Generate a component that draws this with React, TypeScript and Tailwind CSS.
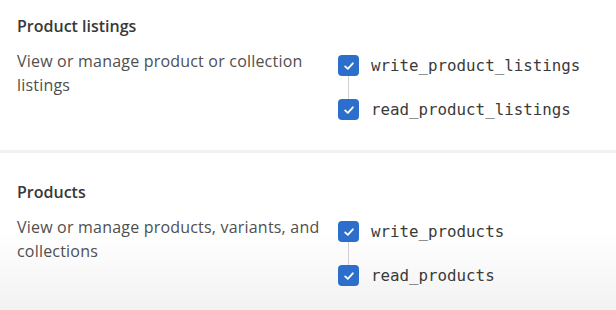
import React from 'react'

type Scope = { title: string; description: string; scopes: string[] }

const sections: Scope[] = [
  {
    title: 'Product listings',
    description: 'View or manage product or collection listings',
    scopes: ['write_product_listings', 'read_product_listings'],
  },
  {
    title: 'Products',
    description: 'View or manage products, variants, and collections',
    scopes: ['write_products', 'read_products'],
  },
]

function Check() {
  return (
    <span className="flex h-[21px] w-[21px] shrink-0 items-center justify-center rounded-[4px] bg-[#2c6ecb]">
      <svg width="14" height="14" viewBox="0 0 20 20" fill="none">
        <path d="M4.5 10.5l3.8 3.6 7.2-8" stroke="white" strokeWidth="2.6" strokeLinecap="round" strokeLinejoin="round" />
      </svg>
    </span>
  )
}

function ScopeList({ scopes }: { scopes: string[] }) {
  return (
    <div className="mt-[6px] flex flex-col">
      {scopes.map((s, i) => (
        <React.Fragment key={s}>
          {i > 0 && <div className="ml-[10px] h-[23px] w-px bg-[#d0d0d0]" />}
          <div className="flex items-center gap-[12px]">
            <Check />
            <span className="font-['DejaVu_Sans_Mono',monospace] text-[15.8px] leading-[21px] text-[#3a3a3a]">{s}</span>
          </div>
        </React.Fragment>
      ))}
    </div>
  )
}

export default function App() {
  return (
    <div className="h-[310px] w-[616px] overflow-hidden bg-white font-['Open_Sans',sans-serif] text-[#333]">
      {sections.map((sec, i) => (
        <section
          key={sec.title}
          className={
            i === 0
              ? 'h-[153px] border-b-[3px] border-[#f1f1f4] pl-[17px] pt-[14px]'
              : 'h-[157px] bg-gradient-to-b from-white from-50% to-[#f2f2f2] pl-[17px] pt-[27px]'
          }
        >
          <h2 className="text-[16px] font-semibold leading-[24px] text-[#383838]">{sec.title}</h2>
          <div className="mt-[11px] flex">
            <p className="w-[316px] shrink-0 text-[16px] tracking-[0.2px] leading-[24px] text-[#4f4f4f]">{sec.description}</p>
            <div className="ml-[5px]">
              <ScopeList scopes={sec.scopes} />
            </div>
          </div>
        </section>
      ))}
    </div>
  )
}
